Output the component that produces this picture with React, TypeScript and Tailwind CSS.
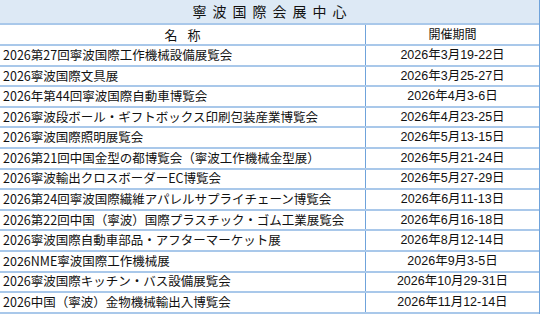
import React from "react";

const rows: [string, string][] = [
  ["2026第27回寧波国際工作機械設備展覧会", "2026年3月19-22日"],
  ["2026寧波国際文具展", "2026年3月25-27日"],
  ["2026年第44回寧波国際自動車博覧会", "2026年4月3-6日"],
  ["2026寧波段ボール・ギフトボックス印刷包装産業博覧会", "2026年4月23-25日"],
  ["2026寧波国際照明展覧会", "2026年5月13-15日"],
  ["2026第21回中国金型の都博覧会（寧波工作機械金型展）", "2026年5月21-24日"],
  ["2026寧波輸出クロスボーダーEC博覧会", "2026年5月27-29日"],
  ["2026第24回寧波国際繊維アパレルサプライチェーン博覧会", "2026年6月11-13日"],
  ["2026第22回中国（寧波）国際プラスチック・ゴム工業展覧会", "2026年6月16-18日"],
  ["2026寧波国際自動車部品・アフターマーケット展", "2026年8月12-14日"],
  ["2026NME寧波国際工作機械展", "2026年9月3-5日"],
  ["2026寧波国際キッチン・バス設備展覧会", "2026年10月29-31日"],
  ["2026中国（寧波）金物機械輸出入博覧会", "2026年11月12-14日"],
];

export default function App() {
  return (
    <div className="w-[540px] h-[315px] bg-white overflow-hidden text-[#111]">
      <div className="flex flex-col border-r border-[#6fa3db]">
        <div className="h-[25px] flex items-center justify-center bg-[#dde9f5] border-b-2 border-[#a9c8ea] text-[14px] tracking-[6px] pl-[6px] font-['Noto_Sans_CJK_JP',sans-serif]">
          寧波国際会展中心
        </div>
        <div className="h-[21px] flex border-b-2 border-[#a9c8ea]">
          <div className="w-[366px] flex items-center justify-center border-r border-[#6fa3db] text-[13px] tracking-[10px] pl-[10px] font-['Noto_Sans_CJK_JP',sans-serif]">
            名称
          </div>
          <div className="flex-1 flex items-center justify-center text-[12px] font-['Liberation_Sans','Noto_Sans_CJK_JP',sans-serif]">
            開催期間
          </div>
        </div>
        {rows.map(([name, date], i) => (
          <div key={i} className="h-[20.6px] flex border-b-2 border-[#a9c8ea]">
            <div className="w-[366px] flex items-center pl-[3px] border-r border-[#6fa3db] text-[12.5px] whitespace-nowrap overflow-hidden font-['Noto_Sans_CJK_JP',sans-serif]">
              {name}
            </div>
            <div className="flex-1 flex items-center justify-center text-[12.5px] whitespace-nowrap font-['Liberation_Sans','Noto_Sans_CJK_JP',sans-serif]">
              {date}
            </div>
          </div>
        ))}
      </div>
    </div>
  );
}
